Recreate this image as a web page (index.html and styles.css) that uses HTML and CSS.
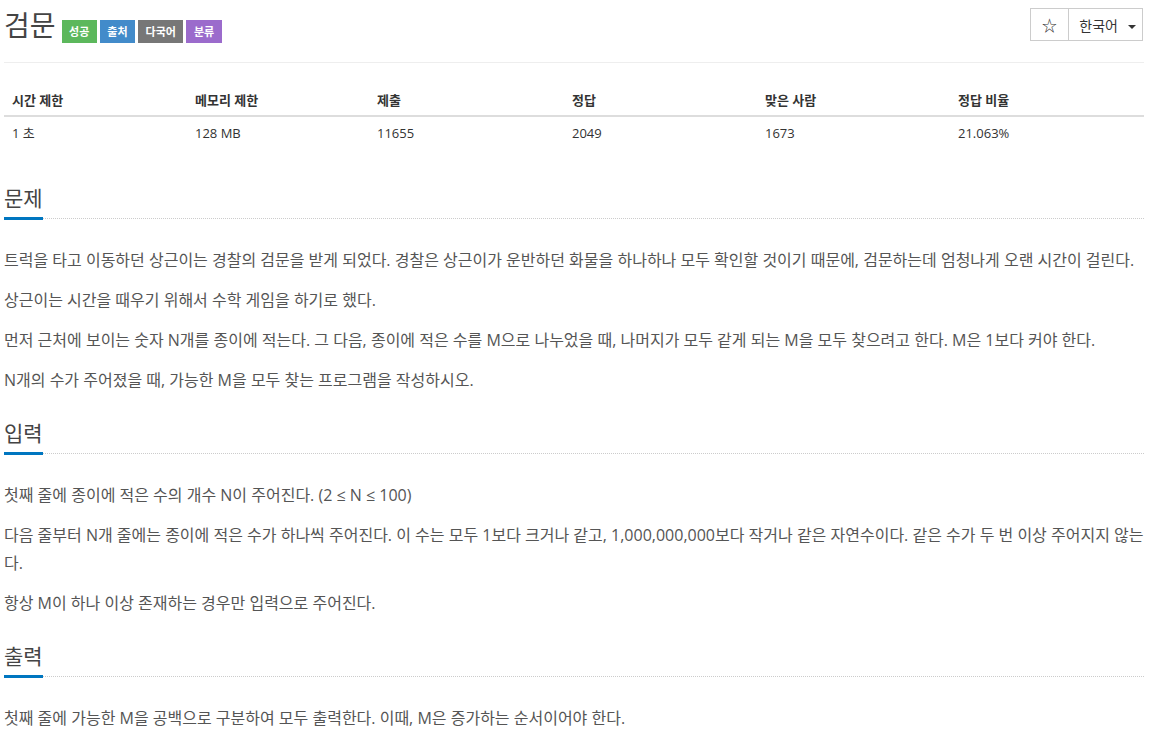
FILE: index.html
```html
<!DOCTYPE html>
<html lang="ko">
<head>
    <meta charset="UTF-8">
    <meta name="viewport" content="width=device-width, initial-scale=1.0">
    <title>검문</title>
    <link rel="stylesheet" href="styles.css">
</head>
<body>
    <div class="page">
        <div class="page-header">
            <div class="title-row">
                <h1 class="problem-title">검문</h1>
                <span class="label label-success">성공</span>
                <span class="label label-primary">출처</span>
                <span class="label label-default">다국어</span>
                <span class="label label-purple">분류</span>
            </div>
            <div class="btn-group">
                <button type="button" class="btn btn-star">☆</button>
                <button type="button" class="btn btn-lang">한국어 <span class="caret"></span></button>
            </div>
        </div>

        <table class="problem-info">
            <thead>
                <tr>
                    <th class="col-1">시간 제한</th>
                    <th class="col-2">메모리 제한</th>
                    <th class="col-3">제출</th>
                    <th class="col-4">정답</th>
                    <th class="col-5">맞은 사람</th>
                    <th class="col-6">정답 비율</th>
                </tr>
            </thead>
            <tbody>
                <tr>
                    <td>1 초</td>
                    <td>128 MB</td>
                    <td>11655</td>
                    <td>2049</td>
                    <td>1673</td>
                    <td>21.063%</td>
                </tr>
            </tbody>
        </table>

        <section class="problem-section">
            <div class="headline"><h2>문제</h2></div>
            <div class="problem-text">
                <p>트럭을 타고 이동하던 상근이는 경찰의 검문을 받게 되었다. 경찰은 상근이가 운반하던 화물을 하나하나 모두 확인할 것이기 때문에, 검문하는데 엄청나게 오랜 시간이 걸린다.</p>
                <p>상근이는 시간을 때우기 위해서 수학 게임을 하기로 했다.</p>
                <p>먼저 근처에 보이는 숫자 N개를 종이에 적는다. 그 다음, 종이에 적은 수를 M으로 나누었을 때, 나머지가 모두 같게 되는 M을 모두 찾으려고 한다. M은 1보다 커야 한다.</p>
                <p>N개의 수가 주어졌을 때, 가능한 M을 모두 찾는 프로그램을 작성하시오.</p>
            </div>
        </section>

        <section class="problem-section">
            <div class="headline"><h2>입력</h2></div>
            <div class="problem-text">
                <p>첫째 줄에 종이에 적은 수의 개수 N이 주어진다. (2 ≤ N ≤ 100)</p>
                <p>다음 줄부터 N개 줄에는 종이에 적은 수가 하나씩 주어진다. 이 수는 모두 1보다 크거나 같고, 1,000,000,000보다 작거나 같은 자연수이다. 같은 수가 두 번 이상 주어지지 않는다.</p>
                <p>항상 M이 하나 이상 존재하는 경우만 입력으로 주어진다.</p>
            </div>
        </section>

        <section class="problem-section">
            <div class="headline"><h2>출력</h2></div>
            <div class="problem-text">
                <p>첫째 줄에 가능한 M을 공백으로 구분하여 모두 출력한다. 이때, M은 증가하는 순서이어야 한다.</p>
            </div>
        </section>
    </div>
</body>
</html>
```

FILE: styles.css
```css
body {
    margin: 0;
    font-family: 'Open Sans', 'Noto Sans CJK KR', sans-serif;
    font-size: 14px;
    color: #333;
    background: #fff;
}

.page {
    padding: 0 9px 0 4px;
}

.page-header {
    display: flex;
    justify-content: space-between;
    align-items: flex-start;
    height: 62px;
    border-bottom: 1px solid #eee;
}

.title-row {
    display: flex;
    align-items: flex-start;
}

.problem-title {
    margin: 8px 6px 0 0;
    font-size: 28px;
    font-weight: 400;
    line-height: 34px;
    color: #444;
}

.label {
    display: inline-block;
    margin: 20px 3px 0 0;
    padding: 0 7.5px;
    height: 23px;
    line-height: 23px;
    font-size: 11px;
    font-weight: 700;
    color: #fff;
}

.label-success { background: #5cb85c; }
.label-primary { background: #428bca; }
.label-default { background: #777; }
.label-purple { background: #9b6bcc; }

.btn-group {
    display: flex;
    margin-top: 8px;
    margin-right: 1px;
}

.btn {
    height: 33px;
    background: #fff;
    border: 1px solid #ccc;
    font-family: 'Open Sans', 'Noto Sans CJK KR', sans-serif;
    font-size: 14px;
    color: #333;
    padding: 0;
    cursor: pointer;
}

.btn-star {
    width: 39px;
    font-size: 15px;
}

.btn-lang {
    width: 75px;
    margin-left: -1px;
    padding-left: 4px;
}

.caret {
    display: inline-block;
    width: 0;
    height: 0;
    margin-left: 6px;
    vertical-align: middle;
    border-top: 4px solid #333;
    border-left: 4px solid transparent;
    border-right: 4px solid transparent;
}

.problem-info {
    width: 100%;
    margin: 19px 0 35px;
    border-collapse: collapse;
    font-size: 13px;
}

.problem-info th,
.problem-info td {
    text-align: left;
    padding: 8px;
    line-height: 20px;
}

.problem-info th {
    font-weight: 700;
    border-bottom: 2px solid #ddd;
    padding-bottom: 5px;
}

.problem-info td {
    padding-top: 6px;
}

.col-1 { width: 167px; }
.col-2 { width: 166px; }
.col-3 { width: 179px; }
.col-4 { width: 177px; }
.col-5 { width: 177px; }

.problem-section {
    margin-top: 27px;
}

.headline {
    border-bottom: 1px dotted #ccc;
}

.headline h2 {
    display: inline-block;
    margin: 0 0 -2px 0;
    padding-bottom: 7px;
    font-size: 21px;
    font-weight: 400;
    line-height: 24px;
    color: #444;
    border-bottom: 3px solid #0076c0;
}

.problem-text {
    padding-top: 27px;
    font-size: 16px;
    line-height: 28px;
    color: #555;
}

.problem-text p {
    margin: 0 0 12px;
}
```
